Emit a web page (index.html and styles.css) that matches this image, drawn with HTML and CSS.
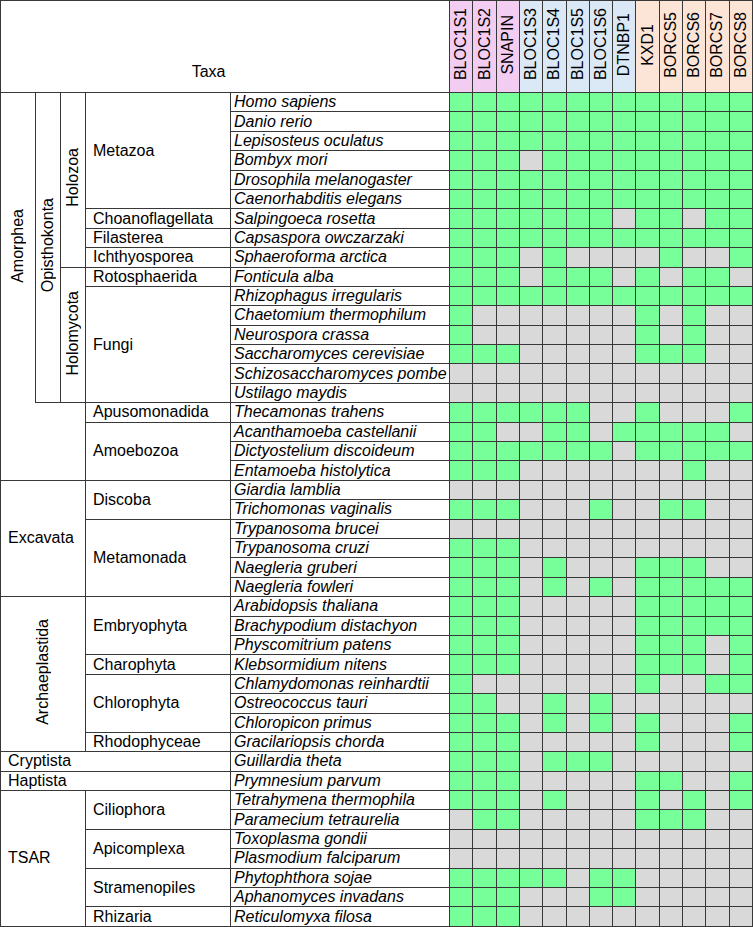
FILE: index.html
```html
<!DOCTYPE html>
<html>
<head>
<meta charset="utf-8">
<title>Taxa</title>
<link rel="stylesheet" href="styles.css">
</head>
<body>
<table class="taxa">
<colgroup>
<col class="c0"><col class="c1"><col class="c2"><col class="c3"><col class="c4">
<col><col><col><col><col><col><col><col><col><col><col><col><col>
</colgroup>
<thead>
<tr>
<th colspan="5" class="title">Taxa</th>
<th class="pk"><span class="vt">BLOC1S1</span></th>
<th class="pk"><span class="vt">BLOC1S2</span></th>
<th class="pk"><span class="vt">SNAPIN</span></th>
<th class="bl"><span class="vt">BLOC1S3</span></th>
<th class="bl"><span class="vt">BLOC1S4</span></th>
<th class="bl"><span class="vt">BLOC1S5</span></th>
<th class="bl"><span class="vt">BLOC1S6</span></th>
<th class="bl"><span class="vt">DTNBP1</span></th>
<th class="pc"><span class="vt">KXD1</span></th>
<th class="pc"><span class="vt">BORCS5</span></th>
<th class="pc"><span class="vt">BORCS6</span></th>
<th class="pc"><span class="vt">BORCS7</span></th>
<th class="pc"><span class="vt">BORCS8</span></th>
</tr>
</thead>
<tbody>
<tr><td rowspan="16" class="rl amor"><span class="vt">Amorphea</span></td><td rowspan="16" class="rl"><span class="vt">Opisthokonta</span></td><td rowspan="9" class="rl"><span class="vt">Holozoa</span></td><td rowspan="6" class="grp">Metazoa</td><td class="sp">Homo sapiens</td>
<td class="y"></td><td class="y"></td><td class="y"></td><td class="y"></td><td class="y"></td><td class="y"></td><td class="y"></td><td class="y"></td><td class="y"></td><td class="y"></td><td class="y"></td><td class="y"></td><td class="y"></td></tr>
<tr><td class="sp">Danio rerio</td>
<td class="y"></td><td class="y"></td><td class="y"></td><td class="y"></td><td class="y"></td><td class="y"></td><td class="y"></td><td class="y"></td><td class="y"></td><td class="y"></td><td class="y"></td><td class="y"></td><td class="y"></td></tr>
<tr><td class="sp">Lepisosteus oculatus</td>
<td class="y"></td><td class="y"></td><td class="y"></td><td class="y"></td><td class="y"></td><td class="y"></td><td class="y"></td><td class="y"></td><td class="y"></td><td class="y"></td><td class="y"></td><td class="y"></td><td class="y"></td></tr>
<tr><td class="sp">Bombyx mori</td>
<td class="y"></td><td class="y"></td><td class="y"></td><td class="n"></td><td class="y"></td><td class="y"></td><td class="y"></td><td class="y"></td><td class="y"></td><td class="y"></td><td class="y"></td><td class="y"></td><td class="y"></td></tr>
<tr><td class="sp">Drosophila melanogaster</td>
<td class="y"></td><td class="y"></td><td class="y"></td><td class="y"></td><td class="y"></td><td class="y"></td><td class="y"></td><td class="y"></td><td class="y"></td><td class="y"></td><td class="y"></td><td class="y"></td><td class="y"></td></tr>
<tr><td class="sp">Caenorhabditis elegans</td>
<td class="y"></td><td class="y"></td><td class="y"></td><td class="y"></td><td class="y"></td><td class="y"></td><td class="y"></td><td class="y"></td><td class="y"></td><td class="y"></td><td class="y"></td><td class="y"></td><td class="y"></td></tr>
<tr><td class="grp">Choanoflagellata</td><td class="sp">Salpingoeca rosetta</td>
<td class="y"></td><td class="y"></td><td class="y"></td><td class="y"></td><td class="y"></td><td class="y"></td><td class="y"></td><td class="n"></td><td class="y"></td><td class="y"></td><td class="n"></td><td class="y"></td><td class="y"></td></tr>
<tr><td class="grp">Filasterea</td><td class="sp">Capsaspora owczarzaki</td>
<td class="y"></td><td class="y"></td><td class="y"></td><td class="y"></td><td class="y"></td><td class="y"></td><td class="y"></td><td class="y"></td><td class="y"></td><td class="y"></td><td class="y"></td><td class="y"></td><td class="y"></td></tr>
<tr><td class="grp">Ichthyosporea</td><td class="sp">Sphaeroforma arctica</td>
<td class="y"></td><td class="y"></td><td class="y"></td><td class="n"></td><td class="y"></td><td class="n"></td><td class="n"></td><td class="n"></td><td class="n"></td><td class="y"></td><td class="n"></td><td class="n"></td><td class="y"></td></tr>
<tr><td rowspan="7" class="rl"><span class="vt">Holomycota</span></td><td class="grp">Rotosphaerida</td><td class="sp">Fonticula alba</td>
<td class="y"></td><td class="y"></td><td class="y"></td><td class="n"></td><td class="y"></td><td class="y"></td><td class="y"></td><td class="n"></td><td class="y"></td><td class="n"></td><td class="y"></td><td class="y"></td><td class="n"></td></tr>
<tr><td rowspan="6" class="grp">Fungi</td><td class="sp">Rhizophagus irregularis</td>
<td class="y"></td><td class="y"></td><td class="y"></td><td class="y"></td><td class="y"></td><td class="y"></td><td class="y"></td><td class="y"></td><td class="y"></td><td class="y"></td><td class="y"></td><td class="y"></td><td class="y"></td></tr>
<tr><td class="sp">Chaetomium thermophilum</td>
<td class="y"></td><td class="n"></td><td class="n"></td><td class="n"></td><td class="n"></td><td class="n"></td><td class="n"></td><td class="n"></td><td class="y"></td><td class="n"></td><td class="y"></td><td class="n"></td><td class="n"></td></tr>
<tr><td class="sp">Neurospora crassa</td>
<td class="y"></td><td class="n"></td><td class="n"></td><td class="n"></td><td class="n"></td><td class="n"></td><td class="n"></td><td class="n"></td><td class="y"></td><td class="n"></td><td class="y"></td><td class="n"></td><td class="n"></td></tr>
<tr><td class="sp">Saccharomyces cerevisiae</td>
<td class="y"></td><td class="y"></td><td class="y"></td><td class="n"></td><td class="n"></td><td class="n"></td><td class="n"></td><td class="n"></td><td class="y"></td><td class="y"></td><td class="y"></td><td class="n"></td><td class="n"></td></tr>
<tr><td class="sp">Schizosaccharomyces pombe</td>
<td class="n"></td><td class="n"></td><td class="n"></td><td class="n"></td><td class="n"></td><td class="n"></td><td class="n"></td><td class="n"></td><td class="n"></td><td class="n"></td><td class="n"></td><td class="n"></td><td class="n"></td></tr>
<tr><td class="sp">Ustilago maydis</td>
<td class="n"></td><td class="n"></td><td class="n"></td><td class="n"></td><td class="n"></td><td class="n"></td><td class="n"></td><td class="n"></td><td class="n"></td><td class="n"></td><td class="n"></td><td class="n"></td><td class="n"></td></tr>
<tr><td colspan="3" rowspan="4" class="blank"></td><td class="grp">Apusomonadida</td><td class="sp">Thecamonas trahens</td>
<td class="y"></td><td class="y"></td><td class="y"></td><td class="y"></td><td class="y"></td><td class="y"></td><td class="n"></td><td class="n"></td><td class="y"></td><td class="n"></td><td class="n"></td><td class="n"></td><td class="y"></td></tr>
<tr><td rowspan="3" class="grp">Amoebozoa</td><td class="sp">Acanthamoeba castellanii</td>
<td class="y"></td><td class="y"></td><td class="n"></td><td class="n"></td><td class="y"></td><td class="y"></td><td class="n"></td><td class="y"></td><td class="y"></td><td class="y"></td><td class="y"></td><td class="y"></td><td class="n"></td></tr>
<tr><td class="sp">Dictyostelium discoideum</td>
<td class="y"></td><td class="y"></td><td class="y"></td><td class="y"></td><td class="y"></td><td class="y"></td><td class="y"></td><td class="n"></td><td class="y"></td><td class="y"></td><td class="y"></td><td class="y"></td><td class="y"></td></tr>
<tr><td class="sp">Entamoeba histolytica</td>
<td class="y"></td><td class="y"></td><td class="y"></td><td class="n"></td><td class="n"></td><td class="n"></td><td class="n"></td><td class="n"></td><td class="n"></td><td class="n"></td><td class="y"></td><td class="n"></td><td class="n"></td></tr>
<tr><td colspan="3" rowspan="6" class="grp">Excavata</td><td rowspan="2" class="grp">Discoba</td><td class="sp">Giardia lamblia</td>
<td class="n"></td><td class="n"></td><td class="n"></td><td class="n"></td><td class="n"></td><td class="n"></td><td class="n"></td><td class="n"></td><td class="n"></td><td class="n"></td><td class="n"></td><td class="n"></td><td class="n"></td></tr>
<tr><td class="sp">Trichomonas vaginalis</td>
<td class="y"></td><td class="y"></td><td class="y"></td><td class="n"></td><td class="n"></td><td class="n"></td><td class="y"></td><td class="n"></td><td class="n"></td><td class="y"></td><td class="y"></td><td class="n"></td><td class="n"></td></tr>
<tr><td rowspan="4" class="grp">Metamonada</td><td class="sp">Trypanosoma brucei</td>
<td class="n"></td><td class="n"></td><td class="n"></td><td class="n"></td><td class="n"></td><td class="n"></td><td class="n"></td><td class="n"></td><td class="n"></td><td class="n"></td><td class="n"></td><td class="n"></td><td class="n"></td></tr>
<tr><td class="sp">Trypanosoma cruzi</td>
<td class="y"></td><td class="y"></td><td class="y"></td><td class="n"></td><td class="n"></td><td class="n"></td><td class="n"></td><td class="n"></td><td class="n"></td><td class="n"></td><td class="n"></td><td class="n"></td><td class="n"></td></tr>
<tr><td class="sp">Naegleria gruberi</td>
<td class="y"></td><td class="y"></td><td class="y"></td><td class="n"></td><td class="y"></td><td class="n"></td><td class="n"></td><td class="n"></td><td class="y"></td><td class="y"></td><td class="y"></td><td class="n"></td><td class="n"></td></tr>
<tr><td class="sp">Naegleria fowleri</td>
<td class="y"></td><td class="y"></td><td class="y"></td><td class="n"></td><td class="y"></td><td class="n"></td><td class="y"></td><td class="n"></td><td class="y"></td><td class="y"></td><td class="y"></td><td class="y"></td><td class="y"></td></tr>
<tr><td colspan="3" rowspan="8" class="rl"><span class="vt">Archaeplastida</span></td><td rowspan="3" class="grp">Embryophyta</td><td class="sp">Arabidopsis thaliana</td>
<td class="y"></td><td class="y"></td><td class="y"></td><td class="n"></td><td class="n"></td><td class="n"></td><td class="n"></td><td class="n"></td><td class="y"></td><td class="y"></td><td class="y"></td><td class="y"></td><td class="y"></td></tr>
<tr><td class="sp">Brachypodium distachyon</td>
<td class="y"></td><td class="y"></td><td class="y"></td><td class="n"></td><td class="n"></td><td class="n"></td><td class="n"></td><td class="n"></td><td class="y"></td><td class="y"></td><td class="y"></td><td class="y"></td><td class="y"></td></tr>
<tr><td class="sp">Physcomitrium patens</td>
<td class="y"></td><td class="y"></td><td class="y"></td><td class="n"></td><td class="n"></td><td class="n"></td><td class="n"></td><td class="n"></td><td class="y"></td><td class="y"></td><td class="y"></td><td class="n"></td><td class="y"></td></tr>
<tr><td class="grp">Charophyta</td><td class="sp">Klebsormidium nitens</td>
<td class="y"></td><td class="y"></td><td class="y"></td><td class="n"></td><td class="n"></td><td class="n"></td><td class="n"></td><td class="n"></td><td class="y"></td><td class="y"></td><td class="y"></td><td class="n"></td><td class="y"></td></tr>
<tr><td rowspan="3" class="grp">Chlorophyta</td><td class="sp">Chlamydomonas reinhardtii</td>
<td class="y"></td><td class="n"></td><td class="n"></td><td class="n"></td><td class="n"></td><td class="n"></td><td class="n"></td><td class="n"></td><td class="y"></td><td class="n"></td><td class="n"></td><td class="y"></td><td class="y"></td></tr>
<tr><td class="sp">Ostreococcus tauri</td>
<td class="y"></td><td class="y"></td><td class="n"></td><td class="n"></td><td class="y"></td><td class="n"></td><td class="y"></td><td class="n"></td><td class="n"></td><td class="n"></td><td class="n"></td><td class="n"></td><td class="n"></td></tr>
<tr><td class="sp">Chloropicon primus</td>
<td class="y"></td><td class="y"></td><td class="y"></td><td class="n"></td><td class="y"></td><td class="n"></td><td class="y"></td><td class="n"></td><td class="y"></td><td class="n"></td><td class="n"></td><td class="n"></td><td class="y"></td></tr>
<tr><td class="grp">Rhodophyceae</td><td class="sp">Gracilariopsis chorda</td>
<td class="y"></td><td class="y"></td><td class="y"></td><td class="n"></td><td class="n"></td><td class="n"></td><td class="n"></td><td class="n"></td><td class="y"></td><td class="n"></td><td class="n"></td><td class="n"></td><td class="y"></td></tr>
<tr><td colspan="4" class="grp">Cryptista</td><td class="sp">Guillardia theta</td>
<td class="y"></td><td class="y"></td><td class="y"></td><td class="n"></td><td class="y"></td><td class="y"></td><td class="y"></td><td class="n"></td><td class="n"></td><td class="n"></td><td class="n"></td><td class="n"></td><td class="n"></td></tr>
<tr><td colspan="4" class="grp">Haptista</td><td class="sp">Prymnesium parvum</td>
<td class="y"></td><td class="y"></td><td class="y"></td><td class="n"></td><td class="n"></td><td class="n"></td><td class="n"></td><td class="n"></td><td class="y"></td><td class="y"></td><td class="n"></td><td class="n"></td><td class="y"></td></tr>
<tr><td colspan="3" rowspan="7" class="grp">TSAR</td><td rowspan="2" class="grp">Ciliophora</td><td class="sp">Tetrahymena thermophila</td>
<td class="y"></td><td class="y"></td><td class="y"></td><td class="n"></td><td class="y"></td><td class="n"></td><td class="n"></td><td class="n"></td><td class="y"></td><td class="n"></td><td class="y"></td><td class="n"></td><td class="y"></td></tr>
<tr><td class="sp">Paramecium tetraurelia</td>
<td class="n"></td><td class="y"></td><td class="y"></td><td class="n"></td><td class="n"></td><td class="n"></td><td class="n"></td><td class="n"></td><td class="y"></td><td class="y"></td><td class="y"></td><td class="n"></td><td class="n"></td></tr>
<tr><td rowspan="2" class="grp">Apicomplexa</td><td class="sp">Toxoplasma gondii</td>
<td class="n"></td><td class="n"></td><td class="n"></td><td class="n"></td><td class="n"></td><td class="n"></td><td class="n"></td><td class="n"></td><td class="n"></td><td class="n"></td><td class="n"></td><td class="n"></td><td class="n"></td></tr>
<tr><td class="sp">Plasmodium falciparum</td>
<td class="n"></td><td class="n"></td><td class="n"></td><td class="n"></td><td class="n"></td><td class="n"></td><td class="n"></td><td class="n"></td><td class="n"></td><td class="n"></td><td class="n"></td><td class="n"></td><td class="n"></td></tr>
<tr><td rowspan="2" class="grp">Stramenopiles</td><td class="sp">Phytophthora sojae</td>
<td class="y"></td><td class="y"></td><td class="y"></td><td class="y"></td><td class="y"></td><td class="n"></td><td class="y"></td><td class="y"></td><td class="n"></td><td class="n"></td><td class="n"></td><td class="n"></td><td class="n"></td></tr>
<tr><td class="sp">Aphanomyces invadans</td>
<td class="y"></td><td class="y"></td><td class="y"></td><td class="n"></td><td class="n"></td><td class="n"></td><td class="y"></td><td class="y"></td><td class="n"></td><td class="n"></td><td class="n"></td><td class="n"></td><td class="n"></td></tr>
<tr><td class="grp">Rhizaria</td><td class="sp">Reticulomyxa filosa</td>
<td class="y"></td><td class="y"></td><td class="y"></td><td class="n"></td><td class="n"></td><td class="n"></td><td class="n"></td><td class="n"></td><td class="n"></td><td class="n"></td><td class="n"></td><td class="n"></td><td class="n"></td></tr>
</tbody>
</table>
</body>
</html>
```
FILE: styles.css
```css
html, body {
  margin: 0;
  padding: 0;
  background: #ffffff;
}
body {
  font-family: "Liberation Sans", Arial, sans-serif;
  font-size: 16px;
  color: #000000;
}
.taxa {
  border-collapse: collapse;
  table-layout: fixed;
  width: 753px;
}
.c0 { width: 35px; }
.c1 { width: 25px; }
.c2 { width: 25px; }
.c3 { width: 145px; }
.c4 { width: 219px; }
.taxa th,
.taxa td {
  border: 1px solid #383838;
  padding: 0;
  font-weight: normal;
  line-height: 18px;
  white-space: nowrap;
  overflow: hidden;
}
.taxa thead tr { height: 92px; }
.taxa tbody tr { height: 19.4px; }
.title {
  text-align: center;
  vertical-align: bottom;
  padding: 0 33px 11px 0 !important;
}
.pk { background: #f3cdf1; }
.bl { background: #dbe8f6; }
.pc { background: #fce4d6; }
.taxa th.pk, .taxa th.bl, .taxa th.pc {
  text-align: center;
  vertical-align: middle;
}
.vt {
  display: inline-block;
  writing-mode: vertical-rl;
  transform: rotate(180deg);
  line-height: 18px;
}
.rl {
  text-align: center;
  vertical-align: middle;
}
.amor { border-bottom-style: none !important; }
.blank { border-top-style: none !important; }
.grp {
  text-align: left;
  vertical-align: middle;
  padding-left: 7px !important;
}
.sp {
  font-style: italic;
  text-align: left;
  vertical-align: middle;
  padding-left: 3px !important;
}
.y { background: #77ff99; }
.n { background: #d9d9d9; }
```
